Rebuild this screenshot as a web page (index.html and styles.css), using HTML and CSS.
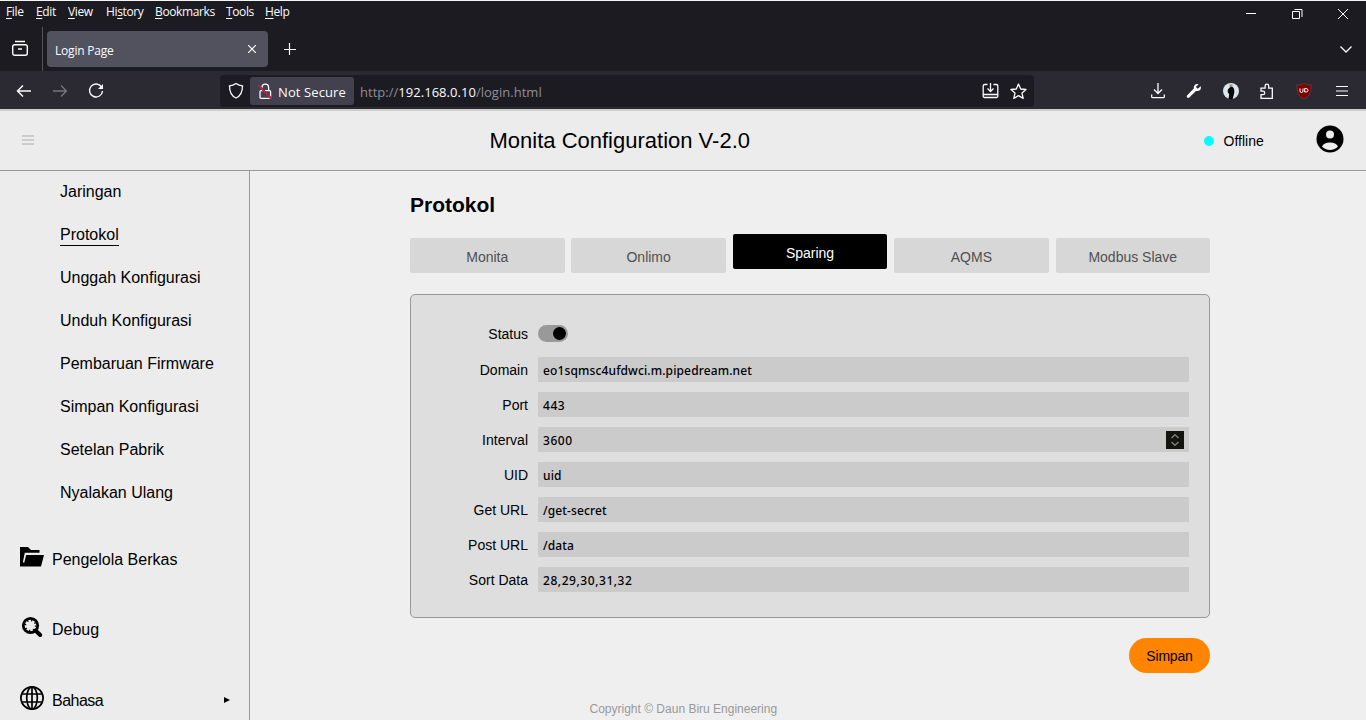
FILE: index.html
```html
<!DOCTYPE html>
<html lang="id">
<head>
<meta charset="utf-8">
<title>Login Page</title>
<link rel="stylesheet" href="styles.css">
</head>
<body>
<div class="menubar">
  <nav class="menus"><span><u>F</u>ile</span><span><u>E</u>dit</span><span><u>V</u>iew</span><span>Hi<u>s</u>tory</span><span><u>B</u>ookmarks</span><span><u>T</u>ools</span><span><u>H</u>elp</span></nav>
  <svg class="window-buttons" width="120" height="26" viewBox="0 0 120 26" fill="none" stroke="#fff"><path d="M0 12.500h10M46.500 10.500h7v7h-7zM48.500 8.500h7.500v7.500M92 8l10 10M102 8l-10 10"/></svg>
</div>
<div class="tabbar">
  <div class="tab-view"><svg width="18" height="18" viewBox="0 0 18 18" fill="none" stroke="#fbfbfe" stroke-width="1.400"><rect x="1.700" y="4.700" width="14.600" height="10.600" rx="2"/><path d="M4 1.500h10M7 9h4"/></svg></div>
  <div class="tab"><span>Login Page</span><svg width="8" height="8" viewBox="0 0 8 8" stroke="#fbfbfe" stroke-width="1.200"><path d="M0 0l8 8M8 0L0 8"/></svg></div>
  <svg class="tab-new" width="12" height="12" viewBox="0 0 12 12" stroke="#fbfbfe" stroke-width="1.200"><path d="M5.500 0v12M0 6.500h12"/></svg>
  <svg class="tab-list" width="12" height="7" viewBox="0 0 12 7" fill="none" stroke="#fbfbfe" stroke-width="1.300"><path d="M.5.5L6 6 11.500.5"/></svg>
</div>
<div class="navbar">
  <div class="nav-buttons">
    <svg width="16" height="14" viewBox="0 0 16 14" fill="none" stroke="#fbfbfe" stroke-width="1.500"><path d="M15 7H1.500M7 1.500L1.500 7 7 12.500"/></svg>
    <svg width="16" height="14" viewBox="0 0 16 14" fill="none" stroke="#77767f" stroke-width="1.300"><path d="M1 7h13.500M9 1.500L14.500 7 9 12.500"/></svg>
    <svg width="16" height="16" viewBox="0 0 16 16" fill="none" stroke="#fbfbfe" stroke-width="1.400"><path d="M13.500 4A6.500 6.500 0 1 0 14.500 8"/><path d="M15 1v5h-5z" fill="#fbfbfe" stroke="none"/></svg>
  </div>
  <div class="urlbar">
    <svg class="shield" width="16" height="18" viewBox="0 0 16 18" fill="none" stroke="#fbfbfe" stroke-width="1.300"><path d="M8 1.500c2.200 1.600 4 2.200 6.500 2.400 0 5.500-1.500 9.800-6.500 12.100C3 13.700 1.500 9.400 1.500 3.900 4 3.700 5.800 3.100 8 1.500z"/></svg>
    <div class="identity"><svg width="15" height="17" viewBox="0 0 15 17" fill="none" stroke="#fbfbfe" stroke-width="1.300"><rect x="2" y="7.700" width="10.600" height="7.600" rx="1"/><path d="M4 7.500V4.500a3.300 3.300 0 0 1 6.600 0v3"/><path d="M.7 2.500l13 13.500" stroke="#42414d" stroke-width="2"/><path d="M.7 2.500l13 13.500" stroke="#f0133f"/></svg><span>Not Secure</span></div>
    <div class="address">http://<b>192.168.0.10</b>/login.html</div>
    <div class="url-actions">
      <svg width="17" height="16" viewBox="0 0 17 16" fill="none" stroke="#fbfbfe" stroke-width="1.300"><path d="M5.500 1.500h-3a1.300 1.300 0 0 0-1.300 1.300v10.400a1.300 1.300 0 0 0 1.300 1.300h12a1.300 1.300 0 0 0 1.300-1.300V2.800a1.300 1.300 0 0 0-1.300-1.300h-3M1.500 11.500h14M8.500 0v8M5.500 5.500l3 3 3-3"/></svg>
      <svg width="17" height="17" viewBox="0 0 17 17" fill="none" stroke="#fbfbfe" stroke-width="1.300" stroke-linejoin="round"><path d="M8.500 1l2.200 5 5.300.5-4 3.600 1.200 5.300-4.700-2.800-4.700 2.800L5 10.100 1 6.500 6.300 6z"/></svg>
    </div>
  </div>
  <div class="extensions">
    <svg width="16" height="16" viewBox="0 0 16 16" fill="none" stroke="#fbfbfe" stroke-width="1.300"><path d="M8 0v10.500M4 6.500L8 10.500l4-4M1.700 11.500v2.200a1 1 0 0 0 1 1h10.600a1 1 0 0 0 1-1v-2.200"/></svg>
    <svg width="16" height="16" viewBox="0 0 16 16" fill="#fbfbfe"><path d="M14.700 3.200l-2.900 2.600-2-1.800L12.500 1.200C10.200.2 7.400 2 7.800 5.400L1 12.500c-1 1.300.8 3.200 2.300 2.100L10 8c3.500.5 5.700-2 4.700-4.800z"/></svg>
    <svg width="16" height="16" viewBox="0 0 16 16"><circle cx="8" cy="8" r="8" fill="#dfe5ec"/><path d="M8 3.500c3 .5 3.600 3 3.300 6L9.700 16H5.500l.7-5C4 9.500 4.300 6 6.800 4.500z" fill="#08080a"/><path d="M6.500 1.500h3v2.500h-3z" fill="#8b9096"/></svg>
    <svg width="16" height="16" viewBox="0 0 16 16" fill="none" stroke="#fbfbfe" stroke-width="1.300"><path d="M2 15.300h11.300V5.200H9.700V3a1.800 1.800 0 0 0-3.600 0v2.200H2v3h2a1.700 1.700 0 0 1 0 3.400H2z"/></svg>
    <svg width="16" height="16" viewBox="0 0 16 16"><path d="M8 0c2 1.500 4 2 7 2 0 7-1 11-7 14C2 13 1 9 1 2c3 0 5-.5 7-2z" fill="#800000" stroke="#7d5558" stroke-width=".5"/><path d="M4 5.500v2.500a1.300 1.300 0 0 0 3 0V5.500M8.700 5.500V9h1.500a1.700 1.700 0 0 0 0-3.500z" fill="none" stroke="#fff"/></svg>
    <svg class="app-menu" width="12" height="12" viewBox="0 0 12 12" stroke="#fbfbfe" stroke-width="1.200"><path d="M0 1.500h12M0 6h12M0 10.500h12"/></svg>
  </div>
</div>
<header class="header">
  <svg class="burger" width="12" height="12" viewBox="0 0 12 12" stroke="#ccc" stroke-width="2"><path d="M0 2h12M0 6h12M0 10h12"/></svg>
  <h1>Monita Configuration V-2.0</h1>
  <div class="status"><i></i>Offline</div>
  <svg class="account" width="28" height="28" viewBox="0 0 28 28"><circle cx="14" cy="14" r="13.500"/><circle cx="14" cy="9.500" r="4" fill="#eee"/><path d="M6 21.500c1.300-2.500 4-3.900 8-3.900s6.700 1.400 8 3.900c-2 2.300-4.800 3.500-8 3.500s-6-1.200-8-3.500z" fill="#eee"/></svg>
</header>
<div class="page">
  <aside class="sidebar">
    <ul class="submenu"><li>Jaringan</li><li><span class="current">Protokol</span></li><li>Unggah Konfigurasi</li><li>Unduh Konfigurasi</li><li>Pembaruan Firmware</li><li>Simpan Konfigurasi</li><li>Setelan Pabrik</li><li>Nyalakan Ulang</li></ul>
    <div class="group"><svg width="24" height="24" viewBox="0 0 24 24"><path d="M0 2h8l3 3h8.500v2.800H4.800L2.800 17.500h1.500l1.900-7.500H24l-3 11.500H0z"/></svg><span>Pengelola Berkas</span></div>
    <div class="group"><svg width="24" height="24" viewBox="0 0 24 24" fill="none" stroke="#000"><circle cx="10.500" cy="10.500" r="7.200" stroke-width="2.800"/><circle cx="10.500" cy="10.500" r="5.200" stroke-width="1.700" stroke-dasharray="1.300 2.784"/><path d="M15.500 15.500l4.700 4.500" stroke-width="4" stroke-linecap="round"/></svg><span>Debug</span></div>
    <div class="group language"><svg width="24" height="24" viewBox="0 0 24 24" fill="none" stroke="#000" stroke-width="1.700"><circle cx="12" cy="12" r="11.100"/><ellipse cx="12" cy="12" rx="5.300" ry="11.100"/><path d="M12 1v22M2 8h20M2 16h20"/></svg><span>Bahasa</span><svg class="arrow" width="6" height="6" viewBox="0 0 6 6"><path d="M0 0l6 3-6 3z"/></svg></div>
  </aside>
  <main class="content">
    <h2>Protokol</h2>
    <div class="tabs"><button>Monita</button><button>Onlimo</button><button class="active">Sparing</button><button>AQMS</button><button>Modbus Slave</button></div>
    <form class="panel">
      <label class="status-label">Status</label><span class="toggle"><i></i></span>
      <label>Domain</label><div class="field">eo1sqmsc4ufdwci.m.pipedream.net</div>
      <label>Port</label><div class="field numeric">443</div>
      <label>Interval</label><div class="field numeric with-spinner">3600<svg width="18" height="18" viewBox="0 0 18 18"><path d="M0 0h18v18H0z" fill="#151510"/><path d="M5.500 7L9 3.800 12.500 7M5.500 11L9 14.200 12.500 11" fill="none" stroke="#7d7d70" stroke-width="1.500"/></svg></div>
      <label>UID</label><div class="field">uid</div>
      <label>Get URL</label><div class="field">/get-secret</div>
      <label>Post URL</label><div class="field">/data</div>
      <label>Sort Data</label><div class="field numeric">28,29,30,31,32</div>
    </form>
    <button class="save">Simpan</button>
    <footer>Copyright © Daun Biru Engineering</footer>
  </main>
</div>
</body>
</html>
```

FILE: styles.css
```css
* { box-sizing: border-box; }
body { margin: 0; width: 1366px; height: 720px; overflow: hidden; display: flex; flex-direction: column; background: #efefef; color: #000; font-family: "Liberation Sans", Arial, sans-serif; }
svg { display: block; flex: none; }
button { border: 0; font: inherit; }
.menubar, .tabbar, .navbar { flex: none; display: flex; color: #fbfbfe; font-family: "Open Sans", "Noto Sans", sans-serif; background: #1c1b22; }
.menubar { height: 27px; border-top: 1px solid #f4f4f4; justify-content: space-between; }
.menus { display: grid; grid-template-columns: 30px 32px 38px 49px 71px 39px 40px; padding-left: 6px; font-size: 12px; line-height: 22px; letter-spacing: -.37px; white-space: nowrap; }
.menus u { text-underline-offset: 2px; }
.tabbar { height: 44px; align-items: center; padding-right: 14px; }
.tab-view { width: 43px; height: 44px; border-right: 1px solid #53525d; padding: 13px 0 0 11px; }
.tab { width: 221px; height: 36px; margin-left: 4px; padding: 0 12px 0 8px; border-radius: 4px; background: #52525e; display: flex; align-items: center; justify-content: space-between; font-size: 12px; letter-spacing: -.2px; }
.tab span { padding-top: 2px; }
.tab-new { margin-left: 16px; }
.tab-list { margin-left: auto; }
.navbar { height: 38px; background: #2b2a33; }
.nav-buttons { width: 220px; display: flex; align-items: center; gap: 20px; padding: 2px 0 0 16px; }
.urlbar { width: 814px; height: 32px; margin-top: 4px; border-radius: 4px; background: #1c1b22; display: flex; align-items: center; }
.shield { margin: 0 6px 0 8px; }
.identity { width: 104px; height: 28px; border-radius: 3px; background: #42414d; display: flex; align-items: center; gap: 5px; padding-left: 8px; font-size: 13px; letter-spacing: .1px; white-space: nowrap; }
.identity span { padding-top: 2px; }
.address { margin-left: 6px; padding-top: 2px; font-size: 13px; letter-spacing: .03px; color: #8e8d96; white-space: nowrap; }
.address b { color: #fbfbfe; font-weight: 400; }
.url-actions { margin-left: auto; display: flex; align-items: center; gap: 11px; padding-right: 7.500px; }
.extensions { margin-left: auto; display: flex; align-items: center; gap: 20.500px; padding: 2px 18px 0 0; }
.app-menu { margin-left: 4px; }
.header { height: 62px; flex: none; background: #ececec; border-top: 2px solid #d0cec8; border-bottom: 1px solid #999; display: flex; align-items: center; }
.burger { margin: -2px 0 0 22px; }
.header h1 { margin: 0 0 0 455.500px; width: 262px; font-size: 22px; font-weight: 400; white-space: nowrap; }
.status { display: flex; align-items: center; gap: 10px; margin-left: 452px; width: 62px; font-size: 14px; }
.status i { width: 10px; height: 10px; border-radius: 50%; background: #0ff; flex: none; }
.account { margin: -3px 0 0 50px; }
.page { flex: 1; min-height: 0; display: flex; }
.sidebar { width: 250px; background: #ececec; border-right: 1px solid #999; font-size: 16px; }
.submenu { list-style: none; margin: 0 0 5px; padding: 0 0 0 60px; }
.submenu li { height: 43px; line-height: 41px; }
.current { display: inline-block; line-height: 19px; height: 21px; border-bottom: 1px solid #000; }
.group { height: 70px; padding: 8px 0 0 20px; display: flex; align-items: center; gap: 8px; }
.group svg { margin-top: -5px; }
.group span { padding-top: 2px; }
.group.language { height: 72px; padding-right: 19px; }
.language span { letter-spacing: -.5px; }
.group .arrow { margin: 0 0 0 auto; }
.content { width: 800px; margin-left: 160px; display: flex; flex-direction: column; }
.content h2 { margin: 22px 0 0; height: 45px; font-size: 21px; line-height: 24px; }
.tabs { display: flex; gap: 6.850px; height: 35px; margin-bottom: 21px; }
.tabs button { flex: 1; padding: 3px 0 0; border-radius: 2px; background: #d7d7d7; color: #505050; font-size: 14px; }
.tabs .active { transform: translateY(-4px); background: #000; color: #fff; }
.panel { height: 324px; border: 1px solid #999; border-radius: 5px; background: #dedede; padding: 27px 20px 0 20px; display: grid; grid-template-columns: 97px 651px; column-gap: 10px; grid-auto-rows: 25px; row-gap: 10px; }
.panel label { text-align: right; font-size: 14px; line-height: 26px; }
.panel .status-label { line-height: 24px; }
.toggle { width: 30px; height: 17px; margin-top: 3px; border-radius: 9px; background: #999; display: flex; align-items: center; justify-content: flex-end; padding-right: 2px; }
.toggle i { width: 13px; height: 13px; border-radius: 50%; background: #000; }
.field { background: #cbcbcb; padding: 2px 5px 0; display: flex; align-items: flex-start; justify-content: space-between; font: 500 12px/23px "Noto Sans", sans-serif; letter-spacing: .13px; }
.field.numeric { letter-spacing: .55px; }
.with-spinner svg { margin-top: 2px; }
.save { align-self: flex-end; margin-top: 20px; width: 81px; height: 35px; border-radius: 18px; background: #ff8500; font-size: 14px; letter-spacing: -.2px; padding: 1px 0 0; }
footer { margin: 28px 0 0 179.500px; font-size: 12px; color: #999; line-height: 16px; }
```
